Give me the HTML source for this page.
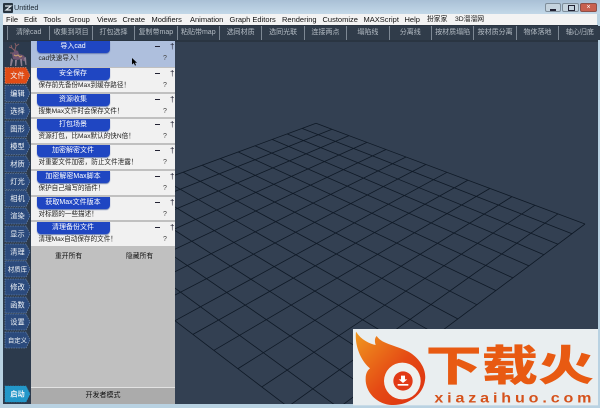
<!DOCTYPE html>
<html><head><meta charset="utf-8"><style>
html,body{margin:0;padding:0;width:600px;height:408px;overflow:hidden;background:#b9d2e2}
body{position:relative;font-family:"Liberation Sans","Noto Sans CJK SC",sans-serif;filter:blur(.2px)}
.a{position:absolute;white-space:nowrap}
#tb{left:0;top:0;width:600px;height:14px;background:linear-gradient(#a9c0d6,#c3d8e8)}
#mb{left:3px;top:14px;width:594px;height:11px;background:#f3f3f3}
#mb span{position:absolute;top:0;font-size:7.5px;line-height:11px;color:#111}
#tl{left:3px;top:25px;width:595px;height:17px;background:#2a3542}
#tl i{position:absolute;top:1px;height:14px;width:42.4px;border-left:1px solid #7d8894;box-sizing:border-box;background:#303c4a;font-style:normal;font-size:7px;line-height:14px;text-align:center;color:#b4bcc4;overflow:hidden}
#vp{left:31px;top:42px;width:567px;height:362px;background:#334052}
#sb{left:3px;top:42px;width:28px;height:362px;background:#2c3a4c}
#pn{left:31px;top:41px;width:144px;height:363px;background:#c0c0c0}
.r{position:absolute;left:0;width:144px;background:#f1f1f1}
.b{position:absolute;left:5.5px;top:0;width:73px;height:12px;background:#1f46c2;border-radius:0 0 4px 4px;box-shadow:0 1px 1px #6a7fb5;color:#fff;font-size:7px;line-height:11px;text-align:center}
.d{position:absolute;left:7.5px;top:13px;font-size:6.6px;line-height:10px;color:#222;white-space:nowrap}
.m{position:absolute;left:124px;top:5px;width:5px;height:1.4px;background:#223}
.p{position:absolute;left:139px;top:0;font-size:8px;line-height:11px;color:#223}
.q{position:absolute;left:132px;top:13px;font-size:7px;line-height:10px;color:#444}
</style></head><body>
<div class="a" id="tb"></div>
<svg class="a" style="left:3px;top:3px" width="10" height="10" viewBox="0 0 10 10"><rect width="10" height="10" rx="1" fill="#26333f"/><path d="M2 3h6L3 7h5" stroke="#dfe7ee" stroke-width="1.2" fill="none"/></svg>
<div class="a" style="left:14px;top:2px;font-size:7.2px;line-height:11px;color:#1c2630">Untitled</div>
<div class="a" style="left:548px;top:-4px;font-size:6px;line-height:7px;color:#b8232a">0:27:1:26</div>
<div class="a" style="left:545px;top:3px;width:16px;height:9px;background:#c5d3de;border:1px solid #7f8e9b;box-sizing:border-box;border-radius:2px"><div class="a" style="left:4px;top:5px;width:6px;height:1.5px;background:#223"></div></div>
<div class="a" style="left:562px;top:3px;width:17px;height:9px;background:#c5d3de;border:1px solid #7f8e9b;box-sizing:border-box;border-radius:2px"><div class="a" style="left:5px;top:1px;width:5px;height:4px;border:1px solid #223"></div></div>
<div class="a" style="left:580px;top:3px;width:17px;height:9px;background:#c8604f;border:1px solid #8c5049;box-sizing:border-box;border-radius:2px;color:#fff;font-size:7px;line-height:7px;text-align:center">×</div>
<div class="a" id="mb">
<span style="left:3px">File</span><span style="left:21px">Edit</span><span style="left:40.5px">Tools</span><span style="left:66px">Group</span><span style="left:94px">Views</span><span style="left:119.5px">Create</span><span style="left:148.5px">Modifiers</span><span style="left:187px">Animation</span><span style="left:226.5px">Graph Editors</span><span style="left:279px">Rendering</span><span style="left:319.5px">Customize</span><span style="left:360.5px">MAXScript</span><span style="left:401.5px">Help</span><span style="left:424px;font-size:6.8px">扮家家</span><span style="left:452px;font-size:6.8px">3D溜溜网</span>
</div>
<div class="a" id="tl">
<i style="left:4px">清除cad</i><i style="left:46.4px">收集到项目</i><i style="left:88.8px">打包选择</i><i style="left:131.2px">复制带map</i><i style="left:173.6px">粘贴带map</i><i style="left:216px">选同材质</i><i style="left:258.4px">选同光联</i><i style="left:300.8px">连接两点</i><i style="left:343.2px">塌陷线</i><i style="left:385.6px">分离线</i><i style="left:428px">按材质塌陷</i><i style="left:470.4px">按材质分离</i><i style="left:512.8px">物体落地</i><i style="left:555.2px">轴心归底</i>
</div>
<div class="a" id="vp"></div>
<svg class="a" style="left:175px;top:42px" width="423" height="362" viewBox="175 42 423 362">
<path fill="none" stroke="#0f1926" stroke-width=".8" d="M316 123.3L585 224M302 128.4L572 233.7M287 133.9L558 244.2M272 139.4L544 254.7M255 145.7L529 265.9M238 151.9L513 277.9M220 158.5L496 290.6M202 165.1L477 304.8M183 172.1L458 319M163 179.5L437 334.7M142 187.2L415 351.2M120 195.2L391 369.1M97 203.7L366 387.8M72 212.8L339 408M46 222.4L314 426.7
M316 123.3L46 222.7M332 129.3L63 235.6M349 135.6L81 249.3M367 142.4L99 263M386 149.5L117 276.6M406 157L136 291M426 164.4L155 305.5M447 172.3L175 320.7M468 180.1L193 334.4M490 188.4L214 350.3M512 196.6L238 368.6M535 205.2L262 386.8M558 213.8L288 406.6M585 224L314 426.3"/>
</svg>
<div class="a" id="sb"></div>
<svg class="a" style="left:0;top:42px" width="31" height="362" viewBox="0 42 31 362" font-size="7.2" text-anchor="middle" fill="#f0f4f8">
<path d="M15 50l3 1 1 3 4 1 3 3-1 3-2 0-1-2-5 1-4-1-1-5z" fill="#6f5470"/>
<path d="M11 58l-1 8h1.500l1.500-6zM15 60l0 6h1.300l.7-6zM20 59l1 7h1.300l-.3-7zM24 58l1.500 7h1l-.5-8z" fill="#8b7f90"/>
<path d="M15 51l-3-3-3-1M12 48l-1-3M15 50l1-4-1-3M16 46l3-2M13 53l-3 0" stroke="#8a6066" stroke-width="1" fill="none"/>
<path d="M14 55l2 1 2-1 2 2 2-1" stroke="#c9a070" stroke-width="1" fill="none"/>
<g stroke="#7a98c0" stroke-width=".6" stroke-dasharray="1.500 1" fill="#2b4a7c">
<path d="M5 67.500h21l4 8-4 8H5z" fill="#e04c16" stroke="#f0a080"/>
<path d="M5 85.500h21l4 8-4 8H5z"/><path d="M5 103h21l4 8-4 8H5z"/><path d="M5 121h21l4 8-4 8H5z"/><path d="M5 138.500h21l4 8-4 8H5z"/><path d="M5 156h21l4 8-4 8H5z"/><path d="M5 173.500h21l4 8-4 8H5z"/><path d="M5 190.500h21l4 8-4 8H5z"/><path d="M5 208h21l4 8-4 8H5z"/><path d="M5 226h21l4 8-4 8H5z"/><path d="M5 244h21l4 8-4 8H5z"/><path d="M5 261h21l4 8-4 8H5z"/><path d="M5 279h21l4 8-4 8H5z"/><path d="M5 297h21l4 8-4 8H5z"/><path d="M5 314h21l4 8-4 8H5z"/><path d="M5 332h21l4 8-4 8H5z"/>
<path d="M5 386h21l4 8-4 8H5z" fill="#2397c9" stroke="#2397c9"/>
</g>
<text x="17.500" y="78.200">文件</text><text x="17.500" y="96.200">编辑</text><text x="17.500" y="113.700">选择</text><text x="17.500" y="131.700">图形</text><text x="17.500" y="149.200">模型</text><text x="17.500" y="166.700">材质</text><text x="17.500" y="184.200">灯光</text><text x="17.500" y="201.200">相机</text><text x="17.500" y="218.700">渲染</text><text x="17.500" y="236.700">显示</text><text x="17.500" y="254.700">清理</text><text x="17.500" y="271.500" font-size="6.400">材质库</text><text x="17.500" y="289.700">修改</text><text x="17.500" y="307.700">函数</text><text x="17.500" y="324.700">设置</text><text x="17.500" y="342.500" font-size="6.400">自定义</text><text x="17.500" y="396.700" font-weight="bold">启动</text>
</svg>
<div class="a" id="pn">
<div class="r" style="top:0;height:26px;background:#aebfdd"><div class="b">导入cad</div><div class="d">cad快速导入！</div><div class="m"></div><div class="p">†</div><div class="q">?</div></div>
<div class="r" style="top:27px;height:24px"><div class="b">安全保存</div><div class="d">保存前先备份Max到缓存路径！</div><div class="m"></div><div class="p">†</div><div class="q">?</div></div>
<div class="r" style="top:53px;height:23px"><div class="b">资源收集</div><div class="d">搜集Max文件时会保存文件！</div><div class="m"></div><div class="p">†</div><div class="q">?</div></div>
<div class="r" style="top:78px;height:24px"><div class="b">打包场景</div><div class="d">资源打包，比Max默认的快N倍！</div><div class="m"></div><div class="p">†</div><div class="q">?</div></div>
<div class="r" style="top:104px;height:24px"><div class="b">加密解密文件</div><div class="d">对重要文件加密，防止文件泄露！</div><div class="m"></div><div class="p">†</div><div class="q">?</div></div>
<div class="r" style="top:130px;height:24px"><div class="b">加密解密Max脚本</div><div class="d">保护自己编写的插件！</div><div class="m"></div><div class="p">†</div><div class="q">?</div></div>
<div class="r" style="top:156px;height:23px"><div class="b">获取Max文件版本</div><div class="d">对标题的一些描述！</div><div class="m"></div><div class="p">†</div><div class="q">?</div></div>
<div class="r" style="top:181px;height:24px"><div class="b">清理备份文件</div><div class="d">清理Max自动保存的文件！</div><div class="m"></div><div class="p">†</div><div class="q">?</div></div>
<div class="a" style="left:24px;top:211px;font-size:6.800px;line-height:10px;color:#111">重开所有</div>
<div class="a" style="left:95px;top:211px;font-size:6.800px;line-height:10px;color:#111">隐藏所有</div>
<div class="a" style="left:0;top:346px;width:144px;height:1px;background:#e2e2e2"></div>
<div class="a" style="left:0;top:347px;width:144px;height:16px;background:#ababab;font-size:7px;line-height:16px;text-align:center;color:#111">开发者模式</div>
</div>
<svg class="a" style="left:132px;top:58px" width="6" height="8" viewBox="0 0 6 8"><path d="M0 0v6.500l1.800-1.500 1.200 2.600 1-.5L2.900 4.800H5z" fill="#000"/></svg>
<svg class="a" style="left:345px;top:320px" width="255" height="88" viewBox="0 0 765 264">
<defs><linearGradient id="g" x1="0" y1="0" x2="1" y2="1"><stop offset="0" stop-color="#f0981f"/><stop offset=".55" stop-color="#e54a14"/><stop offset="1" stop-color="#dc2f10"/></linearGradient></defs>
<rect x="24" y="27" width="735" height="229" fill="#e9eef0"/>
<path d="M33 35C48 60 75 72 92 75C89 65 88 55 95 48C110 72 150 75 190 95C225 115 245 150 240 180C235 225 190 255 145 255C95 255 60 215 62 175C62 160 68 150 75 145C50 125 28 80 33 35Z" fill="url(#g)"/>
<circle cx="172" cy="183" r="55" fill="#eef0ee"/>
<circle cx="174" cy="183" r="29" fill="#e23a16"/>
<path d="M168 167h12v11h7l-13 11-13-11h7z" fill="#fff"/><rect x="158" y="192" width="32" height="5" fill="#fff"/>
<text x="242" y="181" font-family="'Noto Sans CJK SC',sans-serif" font-weight="900" font-size="126" fill="#e85a12" textLength="505" lengthAdjust="spacingAndGlyphs">下载火</text>
<text transform="translate(268 247) scale(1.15 1)" font-family="'Liberation Sans',sans-serif" font-weight="bold" font-size="42" fill="#d5521c" textLength="410">xiazaihuo.com</text>
</svg>
</body></html>
